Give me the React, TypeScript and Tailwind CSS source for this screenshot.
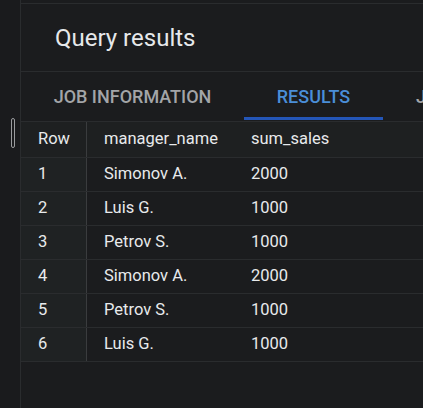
import React from "react";

const rows = [
  { name: "Simonov A.", sales: 2000 },
  { name: "Luis G.", sales: 1000 },
  { name: "Petrov S.", sales: 1000 },
  { name: "Simonov A.", sales: 2000 },
  { name: "Petrov S.", sales: 1000 },
  { name: "Luis G.", sales: 1000 },
];

export default function App() {
  return (
    <div
      className="flex h-[408px] w-[423px] overflow-hidden bg-[#1b1c1e] text-[#e8eaec]"
      style={{ fontFamily: "Roboto, 'Liberation Sans', sans-serif" }}
    >
      {/* left gutter with resize handle */}
      <div className="flex w-[21px] shrink-0 flex-col border-r border-[#2a2c2e] bg-[#1a1b1d]">
        <div className="h-[118px]" />
        <div className="ml-[11px] h-[30px] w-[4px] rounded-sm border border-[#9a9c9e]" />
      </div>

      <div className="flex min-w-0 flex-1 flex-col">
        <div className="h-[3px]" />
        <div className="flex h-[69px] items-center border-y border-[#2a2c2e] pl-[34px]">
          <h1 className="text-[24px] font-normal text-[#e6e8ea]">Query results</h1>
        </div>

        {/* tabs */}
        <div className="flex h-[50px] items-stretch border-b border-[#2a2c2e] text-[18px] font-medium whitespace-nowrap">
          <div className="flex w-[223px] shrink-0 items-center justify-center text-[#a3a5a8]">JOB INFORMATION</div>
          <div className="relative flex w-[139px] shrink-0 items-center justify-center text-[#4a8ed8]">
            RESULTS
            <div className="absolute bottom-[1px] left-0 right-0 h-[3px] bg-[#2456b8]" />
          </div>
          <div className="flex items-center pl-[33px] text-[#a3a5a8]">JSON</div>
        </div>

        {/* table */}
        <div className="text-[16.5px]">
          <div className="flex h-[36px] items-center border-b border-[#2a2c2e] bg-[#1e2021]">
            <div className="flex h-full w-[66px] items-center border-r border-[#3a3c3e] pl-[17px]">Row</div>
            <div className="w-[147px] pl-[17px]">manager_name</div>
            <div className="pl-[17px]">sum_sales</div>
          </div>
          {rows.map((r, i) => (
            <div key={i} className="flex h-[34px] items-center border-b border-[#2a2c2e]">
              <div className="flex h-full w-[66px] items-center border-r border-[#3a3c3e] bg-[#1f2223] pl-[17px]">
                {i + 1}
              </div>
              <div className="w-[147px] pl-[17px]">{r.name}</div>
              <div className="pl-[17px]">{r.sales}</div>
            </div>
          ))}
        </div>
      </div>
    </div>
  );
}
